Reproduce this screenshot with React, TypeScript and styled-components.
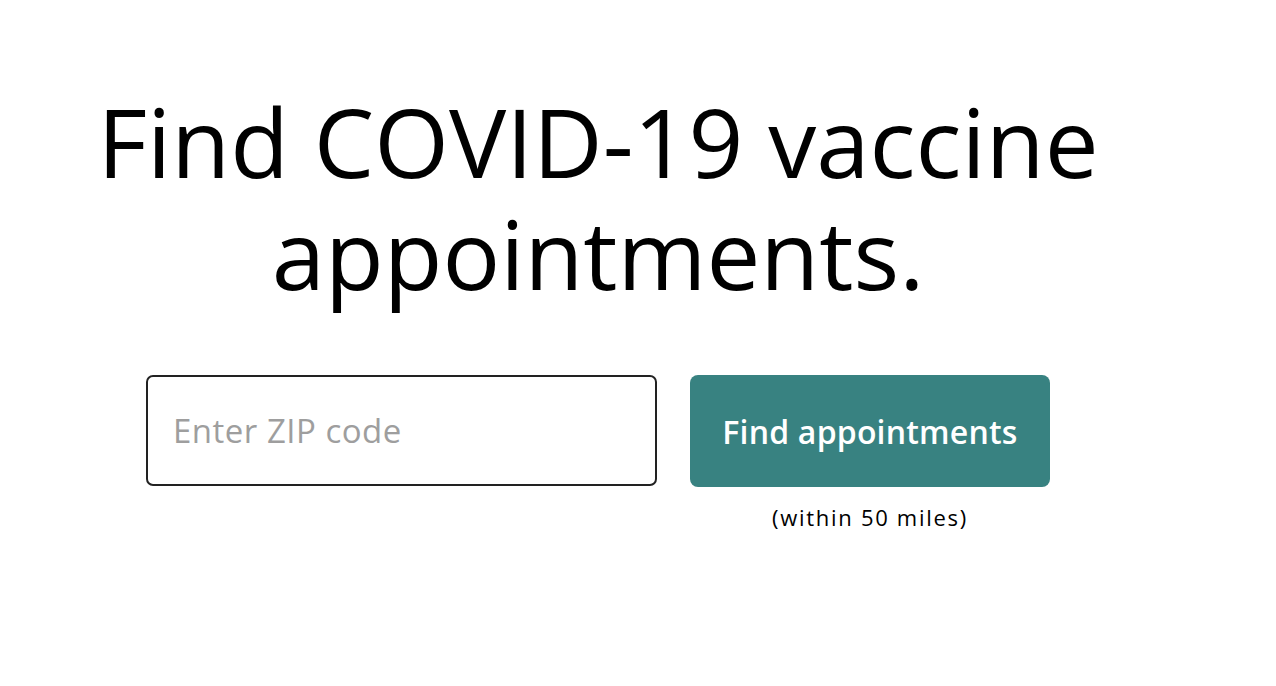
import React, {useState} from "react";
import styled, {createGlobalStyle} from "styled-components";

const GlobalStyle = createGlobalStyle`
  body {
    margin: 0;
    background: #fff;
    font-family: "Open Sans", "Noto Sans", sans-serif;
    color: #000;
  }
`;

const Main = styled.main`
  width: 1196px;
  display: flex;
  flex-direction: column;
  align-items: center;
  padding-top: 85px;
`;

const Title = styled.h1`
  margin: 0;
  font-size: 96px;
  font-weight: 400;
  line-height: 112px;
  text-align: center;
`;

const SearchForm = styled.form`
  display: flex;
  gap: 33px;
  margin-top: 66px;
`;

const ZipInput = styled.input`
  box-sizing: border-box;
  width: 511px;
  height: 111px;
  border: 2px solid #222;
  border-radius: 7px;
  padding: 0 25px;
  font-family: inherit;
  font-size: 33px;
  letter-spacing: 0.5px;
  color: #000;
  outline: none;

  &::placeholder {
    color: #9e9e9e;
  }
`;

const ButtonColumn = styled.div`
  display: flex;
  flex-direction: column;
  align-items: center;
`;

const SubmitButton = styled.button`
  width: 360px;
  height: 112px;
  border: none;
  border-radius: 8px;
  background: #388281;
  color: #fff;
  font-family: inherit;
  font-size: 32px;
  font-weight: 600;
  letter-spacing: 0.2px;
  cursor: pointer;
`;

const Note = styled.div`
  margin-top: 14px;
  font-size: 22px;
  line-height: 32px;
  letter-spacing: 1.7px;
`;

export default function App() {
  const [zip, setZip] = useState("");

  return (
    <>
      <GlobalStyle/>
      <Main>
        <Title>
          Find COVID-19 vaccine
          <br/>
          appointments.
        </Title>
        <SearchForm onSubmit={(e) => e.preventDefault()}>
          <ZipInput
            value={zip}
            onChange={(e) => setZip(e.target.value)}
            placeholder="Enter ZIP code"
            inputMode="numeric"
          />
          <ButtonColumn>
            <SubmitButton type="submit">Find appointments</SubmitButton>
            <Note>(within 50 miles)</Note>
          </ButtonColumn>
        </SearchForm>
      </Main>
    </>
  );
}
